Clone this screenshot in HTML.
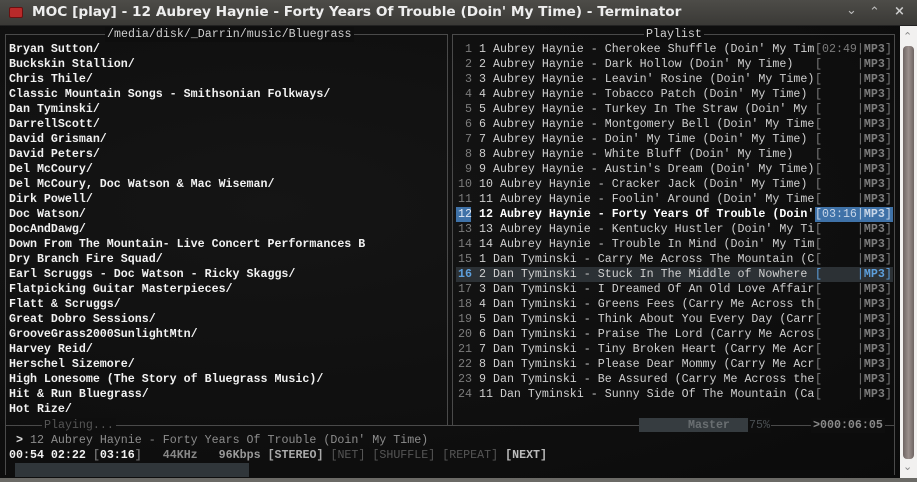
<!DOCTYPE html>
<html><head><meta charset="utf-8"><style>
*{margin:0;padding:0;box-sizing:border-box}
body{width:917px;height:482px;overflow:hidden;background:#0e0e0e;position:relative;font-family:"Liberation Mono","DejaVu Sans Mono",monospace;font-size:11.65px}
.t{position:absolute;white-space:pre;line-height:15px;height:15px}
.b{font-weight:bold}
.w{color:#f2f2f2}
.g{color:#d0d0d0}
.n{color:#7c7c7c}
.d{color:#6a6a6a}
.ln{position:absolute;background:#4a4a4a}
#title{position:absolute;left:0;top:0;width:917px;height:26px;background:linear-gradient(#4d4c48,#3a3936);border-bottom:1px solid #222}
#title span{position:absolute;left:32px;top:4px;font-family:"DejaVu Sans","Liberation Sans",sans-serif;font-weight:bold;font-size:13.7px;color:#eee;white-space:pre}
</style></head><body>
<div style="position:absolute;left:0;top:26px;width:900px;height:452px;background:radial-gradient(ellipse at 30% 40%,#151515,#0b0b0b)"></div>
<div id="title"><div style="position:absolute;left:9px;top:7px;width:14px;height:11px;background:#b92a2a;border:1px solid #6a1010;border-radius:2px"></div><span>MOC [play] - 12 Aubrey Haynie - Forty Years Of Trouble (Doin' My Time) - Terminator</span>
<div style="position:absolute;left:846px;top:3px;color:#bbb;font:13px 'DejaVu Sans',sans-serif">⌄</div>
<div style="position:absolute;left:869px;top:5px;color:#bbb;font:13px 'DejaVu Sans',sans-serif">⌃</div>
<div style="position:absolute;left:894px;top:4px;color:#ccc;font:bold 13px 'DejaVu Sans',sans-serif">×</div></div>
<!-- borders -->
<div class="ln" style="left:5px;top:34px;width:443px;height:1px"></div>
<div class="ln" style="left:5px;top:34px;width:1px;height:391px"></div>
<div class="ln" style="left:447px;top:34px;width:1px;height:391px"></div>
<div class="ln" style="left:452px;top:34px;width:443px;height:1px"></div>
<div class="ln" style="left:452px;top:34px;width:1px;height:391px"></div>
<div class="ln" style="left:894px;top:34px;width:1px;height:391px"></div>
<div class="ln" style="left:5px;top:425px;width:890px;height:1px"></div>
<div class="ln" style="left:5px;top:425px;width:1px;height:50px"></div>
<div class="ln" style="left:894px;top:425px;width:1px;height:50px"></div>
<div class="t g" style="left:105px;top:27px;background:#0e0e0e;padding:0 2px">/media/disk/_Darrin/music/Bluegrass</div>
<div class="t g" style="left:644px;top:27px;background:#0e0e0e;padding:0 2px">Playlist</div>
<!-- left list -->
<div class="t b w" style="left:9px;top:42px;height:auto">Bryan Sutton/
Buckskin Stallion/
Chris Thile/
Classic Mountain Songs - Smithsonian Folkways/
Dan Tyminski/
DarrellScott/
David Grisman/
David Peters/
Del McCoury/
Del McCoury, Doc Watson &amp; Mac Wiseman/
Dirk Powell/
Doc Watson/
DocAndDawg/
Down From The Mountain- Live Concert Performances B
Dry Branch Fire Squad/
Earl Scruggs - Doc Watson - Ricky Skaggs/
Flatpicking Guitar Masterpieces/
Flatt &amp; Scruggs/
Great Dobro Sessions/
GrooveGrass2000SunlightMtn/
Harvey Reid/
Herschel Sizemore/
High Lonesome (The Story of Bluegrass Music)/
Hit &amp; Run Bluegrass/
Hot Rize/</div>
<!-- playlist highlights -->
<div style="position:absolute;left:456px;top:207px;width:15px;height:15px;background:#3f72a8"></div>
<div style="position:absolute;left:815px;top:207px;width:78px;height:15px;background:#3f72a8"></div>
<div style="position:absolute;left:456px;top:267px;width:437px;height:15px;background:#2c3135"></div>
<div class="t n" style="left:458px;top:42px;height:auto"> 1
 2
 3
 4
 5
 6
 7
 8
 9
10
11
<span style="color:#dfe8f5">12</span>
13
14
15
<b style="color:#5d9fdc">16</b>
17
18
19
20
21
22
23
24</div>
<div class="t g" style="left:479px;top:42px;height:auto">1 Aubrey Haynie - Cherokee Shuffle (Doin' My Tim
2 Aubrey Haynie - Dark Hollow (Doin' My Time)
3 Aubrey Haynie - Leavin' Rosine (Doin' My Time)
4 Aubrey Haynie - Tobacco Patch (Doin' My Time)
5 Aubrey Haynie - Turkey In The Straw (Doin' My
6 Aubrey Haynie - Montgomery Bell (Doin' My Time
7 Aubrey Haynie - Doin' My Time (Doin' My Time)
8 Aubrey Haynie - White Bluff (Doin' My Time)
9 Aubrey Haynie - Austin's Dream (Doin' My Time)
10 Aubrey Haynie - Cracker Jack (Doin' My Time)
11 Aubrey Haynie - Foolin' Around (Doin' My Time
<b style="color:#fff">12 Aubrey Haynie - Forty Years Of Trouble (Doin'</b>
13 Aubrey Haynie - Kentucky Hustler (Doin' My Ti
14 Aubrey Haynie - Trouble In Mind (Doin' My Tim
1 Dan Tyminski - Carry Me Across The Mountain (C
2 Dan Tyminski - Stuck In The Middle of Nowhere 
3 Dan Tyminski - I Dreamed Of An Old Love Affair
4 Dan Tyminski - Greens Fees (Carry Me Across th
5 Dan Tyminski - Think About You Every Day (Carr
6 Dan Tyminski - Praise The Lord (Carry Me Acros
7 Dan Tyminski - Tiny Broken Heart (Carry Me Acr
8 Dan Tyminski - Please Dear Mommy (Carry Me Acr
9 Dan Tyminski - Be Assured (Carry Me Across the
11 Dan Tyminski - Sunny Side Of The Mountain (Ca</div>
<div class="t n" style="left:815px;top:42px;height:auto">[02:49|<b>MP3</b>]
[     |<b>MP3</b>]
[     |<b>MP3</b>]
[     |<b>MP3</b>]
[     |<b>MP3</b>]
[     |<b>MP3</b>]
[     |<b>MP3</b>]
[     |<b>MP3</b>]
[     |<b>MP3</b>]
[     |<b>MP3</b>]
[     |<b>MP3</b>]
<span style="color:#c8d6e8">[03:16|<b>MP3</b>]</span>
[     |<b>MP3</b>]
[     |<b>MP3</b>]
[     |<b>MP3</b>]
<span style="color:#5d9fdc">[     |<b>MP3</b>]</span>
[     |<b>MP3</b>]
[     |<b>MP3</b>]
[     |<b>MP3</b>]
[     |<b>MP3</b>]
[     |<b>MP3</b>]
[     |<b>MP3</b>]
[     |<b>MP3</b>]
[     |<b>MP3</b>]</div>
<!-- bottom -->
<div class="t" style="left:42px;top:418px;background:#0e0e0e;color:#555;padding:0 2px">Playing...</div>
<div style="position:absolute;left:639px;top:418px;width:109px;height:14px;background:#363c40"></div>
<div class="t b" style="left:688px;top:418px;color:#6a6f72">Master</div>
<div class="t" style="left:748px;top:418px;color:#4a4f52;background:#0e0e0e;padding:0 1px">75%</div>
<div class="t b" style="left:811px;top:418px;color:#8a8a8a;background:#0e0e0e;padding:0 2px">&gt;000:06:05</div>
<div class="t" style="left:16px;top:433px;color:#8d8d8d"><b style="color:#ddd">&gt;</b> 12 Aubrey Haynie - Forty Years Of Trouble (Doin' My Time)</div>
<div class="t b" style="left:9px;top:448px;color:#f0f0f0">00:54 02:22 <span class="d">[</span>03:16<span class="d">]</span>   <span style="color:#888">44KHz</span>   <span style="color:#999">96Kbps</span> <span style="color:#aaa">[STEREO]</span> <span style="color:#555;font-weight:normal">[NET] [SHUFFLE] [REPEAT]</span> <span style="color:#bbb">[NEXT]</span></div>
<div style="position:absolute;left:15px;top:463px;width:234px;height:14px;background:#30363a"></div>
<!-- scrollbar -->
<div style="position:absolute;left:900px;top:26px;width:17px;height:452px;background:#f2f1f0"></div>
<div style="position:absolute;left:903px;top:46px;width:11px;height:413px;background:linear-gradient(90deg,#6e6462,#9a8f8c,#6e6462);border-radius:4px"></div>
<div style="position:absolute;left:903px;top:30px;color:#888;font:11px 'DejaVu Sans',sans-serif">⌃</div>
<div style="position:absolute;left:903px;top:460px;color:#888;font:11px 'DejaVu Sans',sans-serif">⌄</div>
<div style="position:absolute;left:0;top:478px;width:917px;height:4px;background:#6b6a66"></div>
</body></html>
